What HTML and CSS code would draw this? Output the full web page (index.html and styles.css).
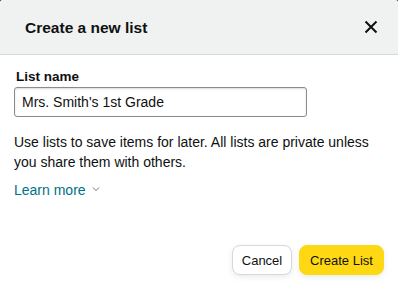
FILE: index.html
```html
<!DOCTYPE html>
<html>
<head>
<meta charset="utf-8">
<link rel="stylesheet" href="styles.css">
</head>
<body>
<div class="dialog">
  <header class="dialog-header">
    <h2 class="dialog-title">Create a new list</h2>
    <button class="close-btn" aria-label="Close">
      <svg width="14" height="14" viewBox="0 0 14 14"><path d="M1.5 1.5 L12.5 12.5 M12.5 1.5 L1.5 12.5" stroke="#0f1111" stroke-width="2" stroke-linecap="butt" fill="none"/></svg>
    </button>
  </header>
  <div class="dialog-body">
    <label class="field-label" for="listname">List name</label>
    <input id="listname" class="text-input" type="text" value="Mrs. Smith's 1st Grade">
    <p class="help-text">Use lists to save items for later. All lists are private unless you share them with others.</p>
    <a class="learn-more" href="#">Learn more <svg class="chev" width="8" height="6" viewBox="0 0 8 6"><path d="M1 1.5 L4 4.5 L7 1.5" stroke="#6f7373" stroke-width="1" fill="none"/></svg></a>
  </div>
  <footer class="dialog-footer">
    <button class="btn btn-secondary">Cancel</button>
    <button class="btn btn-primary">Create List</button>
  </footer>
</div>
</body>
</html>
```
FILE: styles.css
```css
* { box-sizing: border-box; }
html, body { margin: 0; padding: 0; }
body {
  background: #3a3a3a;
  font-family: "Liberation Sans", Arial, sans-serif;
  color: #0f1111;
  width: 398px;
  height: 286px;
  overflow: hidden;
}
.dialog {
  background: #fff;
  border-radius: 3px 3px 0 0;
  height: 286px;
  display: flex;
  flex-direction: column;
  overflow: hidden;
}
.dialog-header {
  background: #f0f2f2;
  border-bottom: 1px solid #d5d9d9;
  height: 55px;
  display: flex;
  align-items: center;
  justify-content: space-between;
  padding: 0 20px 0 25px;
}
.dialog-title {
  margin: 0;
  font-size: 15.5px;
  font-weight: 700;
  line-height: 24px;
  padding-top: 1px;
}
.close-btn {
  background: none;
  border: 0;
  padding: 0;
  width: 14px;
  height: 14px;
  display: flex;
}
.dialog-body {
  padding: 12px 14px 0 14px;
  flex: 1;
}
.field-label {
  display: block;
  font-size: 13.5px;
  font-weight: 700;
  line-height: 19px;
  padding-left: 2px;
  margin-bottom: 1px;
}
.text-input {
  width: 293px;
  height: 30px;
  border: 1px solid #888c8c;
  border-radius: 3px;
  padding: 0 7px;
  font-family: inherit;
  font-size: 14px;
  color: #0f1111;
  box-shadow: 0 1px 2px rgba(15,17,17,.15) inset;
}
.help-text {
  margin: 15px 0 0 0;
  font-size: 14px;
  line-height: 20px;
}
.learn-more {
  display: inline-flex;
  align-items: center;
  gap: 6px;
  margin-top: 9px;
  color: #007185;
  text-decoration: none;
  font-size: 14px;
  line-height: 19px;
}
.chev { margin-top: -3px; }
.dialog-footer {
  display: flex;
  justify-content: flex-end;
  gap: 7px;
  padding: 0 14px 11px 0;
}
.btn {
  height: 30px;
  border-radius: 8px;
  font-family: inherit;
  font-size: 13px;
  color: #0f1111;
  padding: 0;
  border: 1px solid #d5d9d9;
  text-align: center;
}
.btn-secondary {
  width: 60px;
  background: #fff;
  box-shadow: 0 2px 5px rgba(213,217,217,.5);
}
.btn-primary {
  width: 85px;
  background: #ffd814;
  border-color: #ffd814;
  box-shadow: 0 2px 5px rgba(213,217,217,.5);
}
```
